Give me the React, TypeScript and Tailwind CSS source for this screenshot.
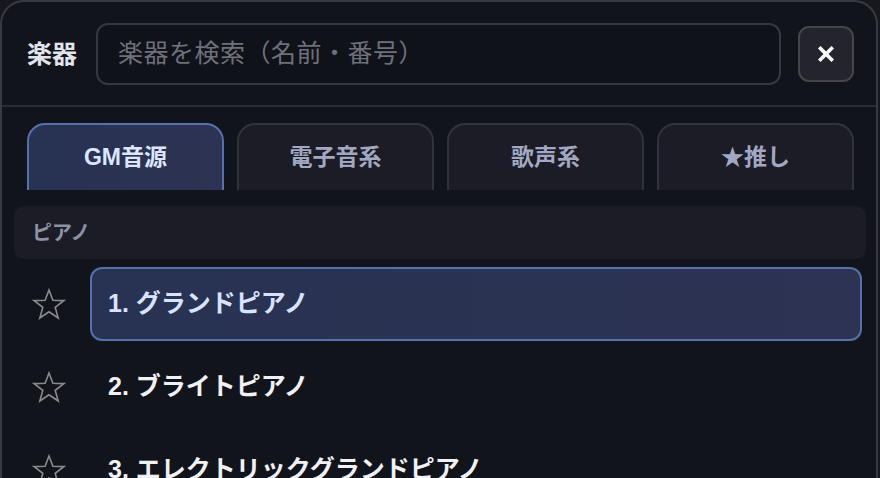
import React from 'react'

const tabs = ['GM音源', '電子音系', '歌声系', '★推し']

const items = [
  { no: 1, name: 'グランドピアノ' },
  { no: 2, name: 'ブライトピアノ' },
  { no: 3, name: 'エレクトリックグランドピアノ' },
]

function StarOutline() {
  return (
    <svg width="34" height="32" viewBox="0 0 34 32" className="shrink-0">
      <polygon
        points="17,2 20.9,12.3 31.8,12.6 23.2,19.4 26.2,30 17,23.8 7.8,30 10.8,19.4 2.2,12.6 13.1,12.3"
        fill="none"
        stroke="#8b8b8f"
        strokeWidth="1.6"
        strokeLinejoin="miter"
      />
    </svg>
  )
}

export default function App() {
  const font = 'font-["Liberation_Sans","Noto_Sans_CJK_JP",sans-serif]'
  return (
    <div className={`h-[478px] overflow-hidden bg-[#17181d] ${font}`}>
      <div className="w-[878px] h-[520px] rounded-t-[24px] border-2 border-b-0 border-[#383942] bg-[#12141b] overflow-hidden flex flex-col">
        {/* Header */}
        <div className="shrink-0 flex items-center pl-[25px] pr-[22px] pt-[21px] pb-[20px] gap-[17px] border-b-2 border-[#2a2c34]">
          <span className="text-[25px] font-bold text-[#e1e4ec] w-[52px] leading-none">楽器</span>
          <div className="flex-1 h-[62px] rounded-[12px] border-2 border-[#353741] bg-[#10121a] flex items-center px-[20px]">
            <span className="text-[25px] tracking-[0.5px] text-[#6e717b]">楽器を検索（名前・番号）</span>
          </div>
          <button className="w-[56px] h-[56px] rounded-[11px] border-2 border-[#45454b] bg-[#24242c] flex items-center justify-center">
            <svg width="16" height="16" viewBox="0 0 16 16">
              <path d="M2.5 2.5 L13.5 13.5 M13.5 2.5 L2.5 13.5" stroke="#ffffff" strokeWidth="3.6" strokeLinecap="square" />
            </svg>
          </button>
        </div>

        {/* Tabs */}
        <div className="shrink-0 flex gap-[13px] pl-[25px] pr-[22px] pt-[16px] h-[83px] overflow-hidden">
          {tabs.map((t, i) => (
            <div
              key={t}
              className={
                i === 0
                  ? 'flex-1 h-[80px] rounded-t-[18px] border-2 border-[#5670ac] bg-gradient-to-r from-[#283252] to-[#2d3352] flex items-start justify-center pt-[15px] text-[23px] font-bold text-[#dce6ff]'
                  : 'flex-1 h-[80px] rounded-t-[18px] border-2 border-[#31323d] bg-[#1b1c25] flex items-start justify-center pt-[15px] text-[23px] font-bold text-[#a2a8c2]'
              }
            >
              {t}
            </div>
          ))}
        </div>

        {/* List */}
        <div className="flex-1 px-[12px] pt-[16px] pr-[10px]">
          <div className="h-[53px] rounded-[10px] bg-[#1b1c25] flex items-center px-[18px] text-[20px] font-bold text-[#8c92a6]">
            ピアノ
          </div>
          <div className="flex flex-col gap-[9px] mt-[8px]">
            {items.map((it, i) => (
              <div key={it.no} className="flex items-center">
                <div className="w-[76px] flex justify-start pl-[18px]">
                  <StarOutline />
                </div>
                <div
                  className={
                    i === 0
                      ? 'flex-1 mr-[4px] h-[74px] rounded-[12px] border-2 border-[#5670ac] bg-gradient-to-r from-[#283252] to-[#2d3352] flex items-center px-[16px] text-[25px] font-bold text-[#d8e3ff]'
                      : 'flex-1 mr-[4px] h-[74px] rounded-[12px] border-2 border-transparent flex items-center px-[16px] text-[25px] font-bold text-[#f0f1f5]'
                  }
                >
                  {it.no}. {it.name}
                </div>
              </div>
            ))}
          </div>
        </div>
      </div>
    </div>
  )
}
